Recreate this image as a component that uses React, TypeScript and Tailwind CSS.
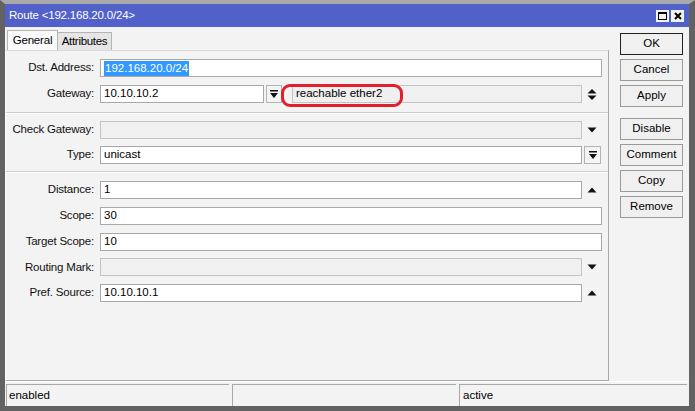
import React from 'react';

const font = { fontFamily: '"Liberation Sans", Arial, sans-serif' };

const UpDown = () => (
  <svg width="10" height="13" viewBox="0 0 10 13">
    <polygon points="0.5,5.5 5,1 9.5,5.5" fill="#111" />
    <polygon points="0.5,7.5 5,12 9.5,7.5" fill="#111" />
  </svg>
);

const Down = () => (
  <svg width="10" height="6" viewBox="0 0 10 6">
    <polygon points="0.5,0.5 9.5,0.5 5,5.5" fill="#111" />
  </svg>
);

const Up = () => (
  <svg width="10" height="6" viewBox="0 0 10 6">
    <polygon points="0.5,5.5 9.5,5.5 5,0.5" fill="#111" />
  </svg>
);

const BarDown = () => (
  <svg width="8" height="9" viewBox="0 0 8 9">
    <rect x="0" y="0" width="8" height="1.5" fill="#111" />
    <polygon points="0,3 8,3 4,8" fill="#111" />
  </svg>
);

const Input: React.FC<{ value?: React.ReactNode; disabled?: boolean; className?: string }> = ({ value, disabled, className = '' }) => (
  <div
    className={`h-[18px] flex items-center pl-[3px] text-[11.5px] text-black border ${
      disabled ? 'bg-[#f0f0f0] border-[#c4c4c4]' : 'bg-white border-[#a8a8a8]'
    } ${className}`}
  >
    {value}
  </div>
);

const Row: React.FC<{ label: string; children: React.ReactNode }> = ({ label, children }) => (
  <div className="flex items-center h-[18px]">
    <div className="w-[89px] text-right text-[11.5px] tracking-[-0.2px] text-[#111] pr-[1px]">{label}</div>
    <div className="ml-[5px] flex items-center w-[502px]">{children}</div>
  </div>
);

const Trail: React.FC<{ children: React.ReactNode }> = ({ children }) => (
  <div className="w-[20px] flex justify-center items-center">{children}</div>
);

const Sep = () => (
  <div className="h-[2px] border-t border-[#cfcfcf] border-b border-b-white" />
);

const Btn: React.FC<{ label: string; def?: boolean }> = ({ label, def }) => (
  <div
    className={`h-[22px] w-[63px] flex items-center justify-center text-[11.5px] text-black bg-[#f0f0f0] ${
      def ? 'border-[1.5px] border-[#222]' : 'border border-[#9a9a9a]'
    }`}
  >
    {label}
  </div>
);

export default function App() {
  return (
    <div
      style={font}
      className="w-[695px] h-[411px] flex flex-col border-t-[4px] border-t-[#a9a9a9] border-l-[5px] border-l-[#626262] border-r-[6px] border-r-[#626262] border-b-[5px] border-b-[#626262]"
    >
      {/* title bar */}
      <div className="h-[23px] bg-[#5161c9] flex items-center justify-between pl-[4px] pr-[5px]">
        <span className="text-[11.5px] tracking-[-0.2px] text-white">Route &lt;192.168.20.0/24&gt;</span>
        <div className="flex gap-[2px]">
          <div className="w-[13px] h-[12px] bg-[#f2f2f2] flex items-center justify-center">
            <div className="w-[9px] h-[8px] border border-black border-t-[2px]" />
          </div>
          <div className="w-[13px] h-[12px] bg-[#f2f2f2] flex items-center justify-center">
            <svg width="8" height="8" viewBox="0 0 8 8">
              <path d="M1 1 L7 7 M7 1 L1 7" stroke="#000" strokeWidth="2" />
            </svg>
          </div>
        </div>
      </div>

      {/* body */}
      <div className="flex-1 bg-[#f3f3f3] flex flex-col">
        <div className="flex flex-1">
          <div className="w-[604px] flex flex-col">
            {/* tabs */}
            <div className="h-[23px] flex items-end pl-[2px]">
              <div className="h-[20px] w-[51px] bg-[#fafafa] border border-b-0 border-[#b4b4b4] flex items-center justify-center text-[11.5px] tracking-[-0.2px] text-black">
                General
              </div>
              <div className="h-[18px] w-[54px] bg-[#e6e6e6] border border-l-0 border-b-0 border-[#b4b4b4] flex items-center justify-center text-[11.5px] tracking-[-0.3px] text-black">
                Attributes
              </div>
            </div>

            {/* panel */}
            <div className="flex-1 border-t border-[#d8d8d8] border-r border-r-[#a8a8a8] border-b border-b-[#a8a8a8] border-l border-l-white flex flex-col">
              <div className="relative flex flex-col gap-[8px] pt-[8px] pb-[9px]">
                <Row label="Dst. Address:">
                  <Input
                    className="w-[502px]"
                    value={<span className="bg-[#3399ff] text-white leading-[15px] px-[1px]">192.168.20.0/24</span>}
                  />
                </Row>
                <Row label="Gateway:">
                  <Input className="w-[164px]" value="10.10.10.2" />
                  <div className="ml-[2px] w-[16px] h-[18px] border border-[#b4b4b4] bg-[#f4f4f4] flex items-center justify-center">
                    <BarDown />
                  </div>
                  <div className="ml-[10px] h-[18px] w-[290px] bg-[#f0f0f0] border border-[#c4c4c4] flex items-center pl-[3px] text-[11.5px] text-black">
                    reachable ether2
                  </div>
                  <Trail>
                    <UpDown />
                  </Trail>
                  <div className="absolute left-[275px] top-[33px] w-[122px] h-[23px] border-[3px] border-[#e2202c] rounded-[9px]" />
                </Row>
              </div>
              <Sep />
              <div className="flex flex-col gap-[7px] pt-[7px] pb-[7px]">
                <Row label="Check Gateway:">
                  <Input disabled className="w-[482px]" />
                  <Trail>
                    <Down />
                  </Trail>
                </Row>
                <Row label="Type:">
                  <Input className="w-[482px]" value="unicast" />
                  <div className="ml-[2px] w-[17px] h-[18px] border border-[#b4b4b4] bg-[#f4f4f4] flex items-center justify-center">
                    <BarDown />
                  </div>
                </Row>
              </div>
              <Sep />
              <div className="flex flex-col gap-[7.75px] pt-[8px]">
                <Row label="Distance:">
                  <Input className="w-[482px]" value="1" />
                  <Trail>
                    <Up />
                  </Trail>
                </Row>
                <Row label="Scope:">
                  <Input className="w-[502px]" value="30" />
                </Row>
                <Row label="Target Scope:">
                  <Input className="w-[502px]" value="10" />
                </Row>
                <Row label="Routing Mark:">
                  <Input disabled className="w-[482px]" />
                  <Trail>
                    <Down />
                  </Trail>
                </Row>
                <Row label="Pref. Source:">
                  <Input className="w-[482px]" value="10.10.10.1" />
                  <Trail>
                    <Up />
                  </Trail>
                </Row>
              </div>
            </div>
          </div>

          {/* buttons */}
          <div className="flex flex-col pl-[11px] pt-[6px]">
            <div className="flex flex-col gap-[4px]">
              <Btn label="OK" def />
              <Btn label="Cancel" />
              <Btn label="Apply" />
            </div>
            <div className="flex flex-col gap-[4px] mt-[11px]">
              <Btn label="Disable" />
              <Btn label="Comment" />
              <Btn label="Copy" />
              <Btn label="Remove" />
            </div>
          </div>
        </div>

        {/* status bar */}
        <div className="h-[25px] flex items-end pl-[1px] pr-[2px] gap-[3px] border-t border-white">
          <div className="h-[22px] w-[223px] border-l border-t border-[#a8a8a8] flex items-center pl-[2px] text-[11.5px] text-black">
            enabled
          </div>
          <div className="h-[22px] w-[224px] border-l border-t border-[#a8a8a8]" />
          <div className="h-[22px] flex-1 border-l border-t border-[#a8a8a8] flex items-center pl-[3px] text-[11.5px] text-black">
            active
          </div>
        </div>
      </div>
    </div>
  );
}
